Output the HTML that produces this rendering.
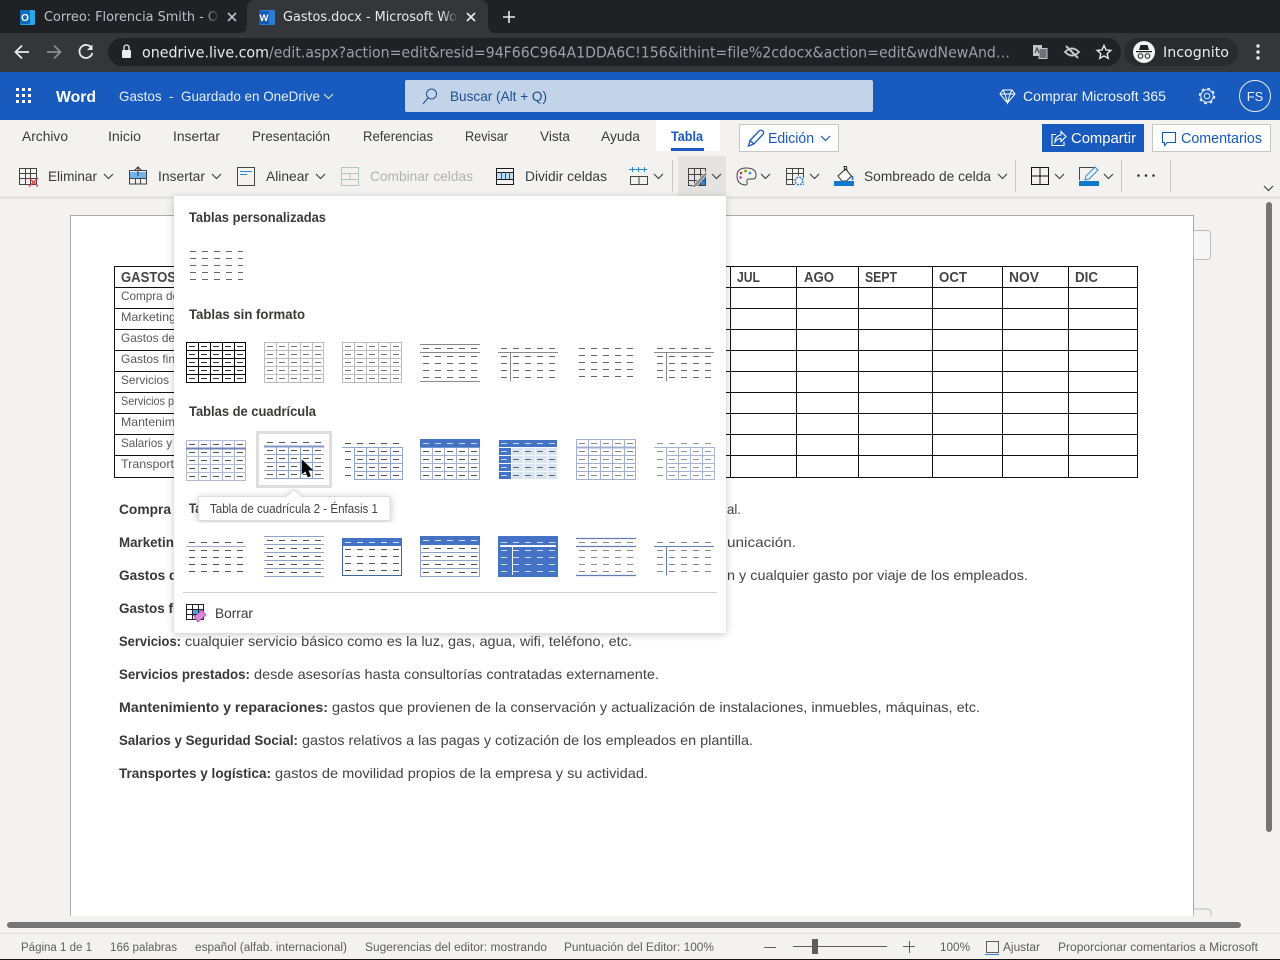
<!DOCTYPE html>
<html lang="es"><head><meta charset="utf-8"><title>Gastos.docx - Microsoft Word</title>
<style>
html,body{margin:0;padding:0;width:1280px;height:960px;overflow:hidden;background:#f3f2f1}
svg{display:block;position:absolute;left:0;top:0}
text{font-family:"Liberation Sans",sans-serif;white-space:pre}
.c{font-family:"DejaVu Sans",sans-serif}
.r{font-size:14px;fill:#3b3a39}
.h{font-size:14px;fill:#3b3a39;font-weight:bold;stroke:none}
.d{font-size:14px;fill:#444}
.b{font-size:14px;fill:#383838;font-weight:bold}
.s{font-size:11.5px;fill:#605e5c}
.t{font-size:12px;fill:#5a5a5a}
.m{font-size:14.5px;fill:#444;font-weight:bold}
.ic{fill:none;stroke:#444;stroke-width:1}
.ch{fill:none;stroke:#444;stroke-width:1.2}
</style></head><body>
<svg width="1280" height="960" viewBox="0 0 1280 960" xmlns="http://www.w3.org/2000/svg">
<defs>
<path id="dd" fill="none" d="M3 4.500h6M15 4.500h6M27 4.500h6M39 4.500h6M51 4.500h6M3 12.500h6M15 12.500h6M27 12.500h6M39 12.500h6M51 12.500h6M3 20.500h6M15 20.500h6M27 20.500h6M39 20.500h6M51 20.500h6M3 28.500h6M15 28.500h6M27 28.500h6M39 28.500h6M51 28.500h6M3 36.500h6M15 36.500h6M27 36.500h6M39 36.500h6M51 36.500h6"/>
<path id="dl" fill="none" d="M3 6.500h6M15 6.500h6M27 6.500h6M39 6.500h6M51 6.500h6M3 13.500h6M15 13.500h6M27 13.500h6M39 13.500h6M51 13.500h6M3 20.500h6M15 20.500h6M27 20.500h6M39 20.500h6M51 20.500h6M3 27.500h6M15 27.500h6M27 27.500h6M39 27.500h6M51 27.500h6M3 34.500h6M15 34.500h6M27 34.500h6M39 34.500h6M51 34.500h6"/>
<path id="dh" fill="none" d="M3 6.500h6M15 6.500h6M27 6.500h6M39 6.500h6M51 6.500h6M3 14.500h6M15 14.500h6M27 14.500h6M39 14.500h6M51 14.500h6M3 21.500h6M15 21.500h6M27 21.500h6M39 21.500h6M51 21.500h6M3 28.500h6M15 28.500h6M27 28.500h6M39 28.500h6M51 28.500h6M3 35.500h6M15 35.500h6M27 35.500h6M39 35.500h6M51 35.500h6"/>
<path id="gr" fill="none" d="M.5 .5h59v40h-59zM.5 8.500h59M.5 16.500h59M.5 24.500h59M.5 32.500h59M12.500 .5v40M24.500 .5v40M36.500 .5v40M48.500 .5v40"/>
<path id="gs" fill="none" d="M12.500 8.500h48v32h-48zM12.500 16.500h48M12.500 24.500h48M12.500 32.500h48M24.500 8.500v32M36.500 8.500v32M48.500 8.500v32M0 8.500h13"/>
<path id="cv" fill="none" d="M0 0l4.500 4.500 4.500-4.500"/>
<linearGradient id="f1"><stop offset="0" stop-color="#202124" stop-opacity="0"/><stop offset="1" stop-color="#202124"/></linearGradient>
<linearGradient id="f2"><stop offset="0" stop-color="#35363a" stop-opacity="0"/><stop offset="1" stop-color="#35363a"/></linearGradient>
<filter id="sh" x="-5%" y="-5%" width="110%" height="110%"><feDropShadow dx="0" dy="1.500" stdDeviation="4" flood-color="#000" flood-opacity=".22"/></filter>
</defs>

<!-- doc area -->
<rect x="0" y="196" width="1280" height="764" fill="#f3f2f1"/>
<rect x="0" y="196" width="1280" height="3" fill="#e4e3e2"/>
<rect x="70.500" y="215.500" width="1123" height="760" fill="#fff" stroke="#ababab"/>
<rect x="0" y="916" width="1280" height="44" fill="#f3f2f1"/>
<path d="M1193.500 230.500h14q3 0 3 3v23q0 3-3 3h-14z" fill="#f6f6f6" stroke="#bcbcbc"/>
<path d="M1193.500 916v-7h14q3.500 0 3.500 3.500v3.500" fill="none" stroke="#bcbcbc"/>

<!-- table -->
<path fill="none" stroke="#111" d="M114.500 266.500h1023v211h-1023zM114 287.500h1024M114 308.500h1024M114 329.500h1024M114 350.500h1024M114 371.500h1024M114 392.500h1024M114 413.500h1024M114 434.500h1024M114 455.500h1024M730.500 266v211M796.500 266v211M858.500 266v211M932.500 266v211M1002.500 266v211M1068.500 266v211"/>
<text x="121" y="282" class="m" textLength="55" lengthAdjust="spacingAndGlyphs">GASTOS</text>
<text x="737" y="282" class="m" textLength="23" lengthAdjust="spacingAndGlyphs">JUL</text>
<text x="804" y="282" class="m" textLength="30" lengthAdjust="spacingAndGlyphs">AGO</text>
<text x="865" y="282" class="m" textLength="32" lengthAdjust="spacingAndGlyphs">SEPT</text>
<text x="939" y="282" class="m" textLength="28" lengthAdjust="spacingAndGlyphs">OCT</text>
<text x="1009" y="282" class="m" textLength="30" lengthAdjust="spacingAndGlyphs">NOV</text>
<text x="1075" y="282" class="m" textLength="23" lengthAdjust="spacingAndGlyphs">DIC</text>
<text x="121" y="300" class="t" textLength="58" lengthAdjust="spacingAndGlyphs">Compra de</text>
<text x="121" y="321" class="t" textLength="55" lengthAdjust="spacingAndGlyphs">Marketing</text>
<text x="121" y="342" class="t" textLength="54" lengthAdjust="spacingAndGlyphs">Gastos de</text>
<text x="121" y="363" class="t" textLength="54" lengthAdjust="spacingAndGlyphs">Gastos fin</text>
<text x="121" y="384" class="t" textLength="48" lengthAdjust="spacingAndGlyphs">Servicios</text>
<text x="121" y="405" class="t" textLength="53" lengthAdjust="spacingAndGlyphs">Servicios p</text>
<text x="121" y="426" class="t" textLength="54" lengthAdjust="spacingAndGlyphs">Mantenim</text>
<text x="121" y="447" class="t" textLength="51" lengthAdjust="spacingAndGlyphs">Salarios y</text>
<text x="121" y="468" class="t" textLength="53" lengthAdjust="spacingAndGlyphs">Transport</text>

<!-- doc paragraphs -->
<text x="119" y="514" class="b" textLength="52" lengthAdjust="spacingAndGlyphs">Compra</text>
<text x="727" y="514" class="d" textLength="14" lengthAdjust="spacingAndGlyphs">al.</text>
<text x="119" y="547" class="b" textLength="63" lengthAdjust="spacingAndGlyphs">Marketing</text>
<text x="727" y="547" class="d" textLength="69" lengthAdjust="spacingAndGlyphs">unicación.</text>
<text x="119" y="580" class="b" textLength="66" lengthAdjust="spacingAndGlyphs">Gastos de</text>
<text x="727" y="580" class="d" textLength="301" lengthAdjust="spacingAndGlyphs">n y cualquier gasto por viaje de los empleados.</text>
<text x="119" y="613" class="b" textLength="66" lengthAdjust="spacingAndGlyphs">Gastos fin</text>
<text x="119" y="646" class="b" textLength="62" lengthAdjust="spacingAndGlyphs">Servicios:</text>
<text x="185" y="646" class="d" textLength="447" lengthAdjust="spacingAndGlyphs">cualquier servicio básico como es la luz, gas, agua, wifi, teléfono, etc.</text>
<text x="119" y="679" class="b" textLength="131" lengthAdjust="spacingAndGlyphs">Servicios prestados:</text>
<text x="254" y="679" class="d" textLength="405" lengthAdjust="spacingAndGlyphs">desde asesorías hasta consultorías contratadas externamente.</text>
<text x="119" y="712" class="b" textLength="209" lengthAdjust="spacingAndGlyphs">Mantenimiento y reparaciones:</text>
<text x="332" y="712" class="d" textLength="648" lengthAdjust="spacingAndGlyphs">gastos que provienen de la conservación y actualización de instalaciones, inmuebles, máquinas, etc.</text>
<text x="119" y="745" class="b" textLength="179" lengthAdjust="spacingAndGlyphs">Salarios y Seguridad Social:</text>
<text x="302" y="745" class="d" textLength="451" lengthAdjust="spacingAndGlyphs">gastos relativos a las pagas y cotización de los empleados en plantilla.</text>
<text x="119" y="778" class="b" textLength="152" lengthAdjust="spacingAndGlyphs">Transportes y logística:</text>
<text x="275" y="778" class="d" textLength="373" lengthAdjust="spacingAndGlyphs">gastos de movilidad propios de la empresa y su actividad.</text>

<!-- scrollbars -->
<rect x="7" y="922" width="1234" height="6" rx="3" fill="#767676"/>
<rect x="1266" y="202" width="6" height="630" rx="3" fill="#767676"/>

<!-- status bar -->
<rect x="0" y="933" width="1280" height="26" fill="#f3f2f1"/>
<path d="M0 933.500h1280" stroke="#e1dfdd"/>
<rect x="0" y="959" width="1280" height="1" fill="#111"/>
<text x="21" y="951" class="s" textLength="71" lengthAdjust="spacingAndGlyphs">Página 1 de 1</text>
<text x="110" y="951" class="s" textLength="67" lengthAdjust="spacingAndGlyphs">166 palabras</text>
<text x="195" y="951" class="s" textLength="152" lengthAdjust="spacingAndGlyphs">español (alfab. internacional)</text>
<text x="365" y="951" class="s" textLength="182" lengthAdjust="spacingAndGlyphs">Sugerencias del editor: mostrando</text>
<text x="564" y="951" class="s" textLength="150" lengthAdjust="spacingAndGlyphs">Puntuación del Editor: 100%</text>
<path d="M764 947.500h12M793 946.500h94M903 946.500h12M909.500 941v12" stroke="#605e5c" fill="none"/>
<rect x="812" y="939" width="6" height="15" fill="#605e5c"/>
<text x="940" y="951" class="s" textLength="30" lengthAdjust="spacingAndGlyphs">100%</text>
<path d="M986.500 941.500h12v11h-12z" fill="none" stroke="#605e5c"/>
<path d="M985 954.500h14" stroke="#2b88d8"/>
<text x="1003" y="951" class="s" textLength="37" lengthAdjust="spacingAndGlyphs">Ajustar</text>
<text x="1058" y="951" class="s" textLength="200" lengthAdjust="spacingAndGlyphs">Proporcionar comentarios a Microsoft</text>

<!-- browser chrome -->
<rect x="0" y="0" width="1280" height="33" fill="#202124"/>
<rect x="0" y="33" width="1280" height="39" fill="#35363a"/>
<path d="M239 33q8 0 8-8V8q0-8 8-8h225q8 0 8 8v17q0 8 8 8z" fill="#35363a"/>
<rect x="20" y="10" width="15" height="15" rx="1.500" fill="#28a8ea"/><rect x="20" y="10" width="10" height="14" fill="#0f6cbd"/>
<text x="25" y="21" font-size="10" font-weight="bold" fill="#fff" text-anchor="middle">O</text>
<rect x="259" y="10" width="16" height="15" rx="1.500" fill="#2b7cd3"/><rect x="259" y="11" width="10" height="13" fill="#185abd"/>
<text x="264" y="21" font-size="9.500" font-weight="bold" fill="#fff" text-anchor="middle">W</text>
<text x="44" y="21" class="c" font-size="13" fill="#bdc1c6" textLength="174" lengthAdjust="spacingAndGlyphs">Correo: Florencia Smith - O</text>
<rect x="204" y="6" width="16" height="22" fill="url(#f1)"/>
<text x="283" y="21" class="c" font-size="13" fill="#e8eaed" textLength="174" lengthAdjust="spacingAndGlyphs">Gastos.docx - Microsoft Wo</text>
<rect x="442" y="6" width="16" height="22" fill="url(#f2)"/>
<path d="M228 13l8 8M236 13l-8 8" stroke="#bdc1c6" stroke-width="1.600"/>
<path d="M467 13l8 8M475 13l-8 8" stroke="#e8eaed" stroke-width="1.600"/>
<path d="M503 17h12M509 11v12" stroke="#e8eaed" stroke-width="1.600"/>

<path d="M29 52H16M22 45.500l-6.500 6.500 6.500 6.500" fill="none" stroke="#e8eaed" stroke-width="1.800"/>
<path d="M47 52h13M54 45.500l6.500 6.500-6.500 6.500" fill="none" stroke="#8a8d91" stroke-width="1.800"/>
<path d="M91.500 48a6.500 6.500 0 1 0 .8 5" fill="none" stroke="#e8eaed" stroke-width="1.800"/><path d="M92.500 44.500v5.500h-5.500z" fill="#e8eaed"/>
<rect x="108" y="38" width="1013" height="28" rx="14" fill="#202124"/>
<rect x="1124" y="38" width="114" height="28" rx="14" fill="#2a2b2e"/>
<rect x="122" y="50" width="9" height="8" rx="1" fill="#e8eaed"/><path d="M124 50v-2.500a2.500 2.500 0 0 1 5 0v2.500" fill="none" stroke="#e8eaed" stroke-width="1.300"/>
<text x="142" y="57.500" class="c" font-size="15" fill="#e8eaed" textLength="127" lengthAdjust="spacingAndGlyphs">onedrive.live.com</text>
<text x="269" y="57.500" class="c" font-size="15" fill="#9aa0a6" textLength="741" lengthAdjust="spacingAndGlyphs">/edit.aspx?action=edit&amp;resid=94F66C964A1DDA6C!156&amp;ithint=file%2cdocx&amp;action=edit&amp;wdNewAnd…</text>
<rect x="1033" y="45" width="9" height="11" fill="#c4c7c9"/><path d="M1039 48.500h8v10h-8z" fill="#6f7276" stroke="#c4c7c9"/><path d="M1035 53l2-5 2 5" fill="none" stroke="#333"/>
<path d="M1065 52q7-7 14 0q-7 7-14 0z" fill="none" stroke="#c4c7c9" stroke-width="1.800"/><path d="M1066 46l12 12" stroke="#c4c7c9" stroke-width="2"/>
<path d="M1104 45.500l2 4.400 4.800.5-3.600 3.200 1 4.700-4.200-2.400-4.200 2.400 1-4.700-3.600-3.200 4.800-.5z" fill="none" stroke="#e8eaed" stroke-width="1.400"/>
<circle cx="1144" cy="52" r="11" fill="#f1f3f4"/>
<path d="M1136 51h16v1.200h-16zM1139 50l1.500-5h7l1.500 5z" fill="#202124"/>
<circle cx="1140.500" cy="56" r="2.300" fill="none" stroke="#202124"/><circle cx="1147.500" cy="56" r="2.300" fill="none" stroke="#202124"/>
<text x="1163" y="57" class="c" font-size="14.500" fill="#e8eaed" textLength="66" lengthAdjust="spacingAndGlyphs">Incognito</text>
<circle cx="1258" cy="46" r="1.700" fill="#e8eaed"/><circle cx="1258" cy="52" r="1.700" fill="#e8eaed"/><circle cx="1258" cy="58" r="1.700" fill="#e8eaed"/>

<!-- word header -->
<rect x="0" y="72" width="1280" height="48" fill="#185abd"/>
<g fill="#fff"><rect x="16" y="88" width="3" height="3"/><rect x="22" y="88" width="3" height="3"/><rect x="28" y="88" width="3" height="3"/><rect x="16" y="94" width="3" height="3"/><rect x="22" y="94" width="3" height="3"/><rect x="28" y="94" width="3" height="3"/><rect x="16" y="100" width="3" height="3"/><rect x="22" y="100" width="3" height="3"/><rect x="28" y="100" width="3" height="3"/></g>
<text x="56" y="102" font-size="16" font-weight="bold" fill="#fff" textLength="40" lengthAdjust="spacingAndGlyphs">Word</text>
<text x="119" y="101" font-size="14" fill="#e3ecf7" textLength="201" lengthAdjust="spacingAndGlyphs">Gastos  -  Guardado en OneDrive</text>
<use href="#cv" x="324" y="94" stroke="#e3ecf7"/>
<rect x="405" y="80" width="468" height="32" rx="2" fill="#c3d4e9"/>
<circle cx="431.500" cy="94" r="5" fill="none" stroke="#1f4f90"/><path d="M428 98l-5 6" stroke="#1f4f90"/>
<text x="450" y="101" font-size="14" fill="#1d4d8f" textLength="97" lengthAdjust="spacingAndGlyphs">Buscar (Alt + Q)</text>
<path d="M1003 90h9l3 4-7.500 9-7.500-9zM1000 94h15M1005 94l2.500 9 2.500-9M1003 90l2 4M1012 90l-2 4" fill="none" stroke="#fff"/>
<text x="1023" y="101" font-size="14" fill="#eef3fa" textLength="143" lengthAdjust="spacingAndGlyphs">Comprar Microsoft 365</text>
<circle cx="1207" cy="96" r="2.800" fill="none" stroke="#e3ecf7"/><circle cx="1207" cy="96" r="6.200" fill="none" stroke="#e3ecf7"/><circle cx="1207" cy="96" r="7.500" fill="none" stroke="#e3ecf7" stroke-width="1.500" stroke-dasharray="2.900 3"/>
<circle cx="1255" cy="96" r="15.500" fill="none" stroke="#e3ecf7"/>
<text x="1255" y="101" font-size="13" fill="#e8eff8" text-anchor="middle">FS</text>

<!-- ribbon -->
<rect x="0" y="120" width="1280" height="76" fill="#f3f2f1"/>
<rect x="656" y="120" width="64" height="31" fill="#fff"/>
<rect x="671" y="148" width="33" height="3" fill="#185abd"/>
<text x="22" y="141" class="r" textLength="46" lengthAdjust="spacingAndGlyphs">Archivo</text>
<text x="108" y="141" class="r" textLength="33" lengthAdjust="spacingAndGlyphs">Inicio</text>
<text x="173" y="141" class="r" textLength="47" lengthAdjust="spacingAndGlyphs">Insertar</text>
<text x="252" y="141" class="r" textLength="78" lengthAdjust="spacingAndGlyphs">Presentación</text>
<text x="363" y="141" class="r" textLength="70" lengthAdjust="spacingAndGlyphs">Referencias</text>
<text x="465" y="141" class="r" textLength="43" lengthAdjust="spacingAndGlyphs">Revisar</text>
<text x="540" y="141" class="r" textLength="30" lengthAdjust="spacingAndGlyphs">Vista</text>
<text x="601" y="141" class="r" textLength="39" lengthAdjust="spacingAndGlyphs">Ayuda</text>
<text x="671" y="141" font-size="14" font-weight="bold" fill="#185abd" textLength="32" lengthAdjust="spacingAndGlyphs">Tabla</text>

<rect x="739.500" y="124.500" width="99" height="27" fill="#fff" stroke="#c8c6c4"/>
<path d="M748.500 146l1.500-5.500 9-9.500q2-1.500 3.800 0t0 3.500l-9 9.500zM750 140.500l4 3.500" fill="none" stroke="#185abd" stroke-width="1.300"/>
<text x="768" y="143" font-size="14.500" fill="#185abd" textLength="46" lengthAdjust="spacingAndGlyphs">Edición</text>
<use href="#cv" x="821" y="136" stroke="#185abd" stroke-width="1.200"/>
<rect x="1042" y="124" width="102" height="28" fill="#185abd"/>
<path d="M1056 134.500h-4v11h12v-4M1055 142q0-6 6-7v-3.500l5 5-5 5v-3q-4 0-6 3.500z" fill="none" stroke="#fff" stroke-width="1.100"/>
<text x="1071" y="143" font-size="14.500" fill="#fff" textLength="65" lengthAdjust="spacingAndGlyphs">Compartir</text>
<rect x="1152.500" y="124.500" width="118" height="27" fill="#fff" stroke="#c8c6c4"/>
<path d="M1162.500 132.500h13v10h-8l-3 3v-3h-2z" fill="none" stroke="#185abd" stroke-width="1.100"/>
<text x="1181" y="143" font-size="14.500" fill="#185abd" textLength="81" lengthAdjust="spacingAndGlyphs">Comentarios</text>

<!-- toolbar -->
<rect x="678" y="156" width="48" height="40" fill="#e5e3e1"/>
<path d="M672.500 160v32M1015.500 160v32M1121.500 160v32M1170.500 160v32" stroke="#c8c6c4"/>
<path class="ic" d="M19.500 168.500h17v16h-17zM19.500 173.500h17M19.500 178.500h17M25.500 168.500v16M30.500 168.500v16"/>
<path d="M29 178l9 8.500M38 178l-9 8.500" stroke="#e8403d" stroke-width="1.400"/>
<text x="48" y="181" class="r" textLength="49" lengthAdjust="spacingAndGlyphs">Eliminar</text><use href="#cv" x="104" y="174" class="ch"/>
<rect x="129.500" y="172" width="17" height="6" fill="#6fb3e8"/>
<path class="ic" d="M129.500 170.500h17v13.500h-17zM129.500 178.500h17M135.500 178v6M140.500 178v6"/>
<path d="M138 176v-9M134.500 170.500l3.500-3.500 3.500 3.500" fill="none" stroke="#333"/>
<text x="158" y="181" class="r" textLength="47" lengthAdjust="spacingAndGlyphs">Insertar</text><use href="#cv" x="212" y="174" class="ch"/>
<rect class="ic" x="237.500" y="167.500" width="17" height="18" fill="#fff"/><path d="M240 171.500h12M240 174.500h7" stroke="#2b88d8"/>
<text x="266" y="181" class="r" textLength="43" lengthAdjust="spacingAndGlyphs">Alinear</text><use href="#cv" x="316" y="174" class="ch"/>
<path d="M341.500 167.500h17v18h-17zM341.500 173.500h17M341.500 179.500h17M350 173.500v6" fill="none" stroke="#b5c4bd"/>
<text x="370" y="181" font-size="14" fill="#b3b0ad" textLength="103" lengthAdjust="spacingAndGlyphs">Combinar celdas</text>
<rect x="497" y="172" width="16" height="7" fill="#bcdcf5"/>
<path d="M496.500 168.500h17v16h-17zM496.500 172.500h17M496.500 179.500h17" fill="none" stroke="#1a1a1a"/><path d="M501.500 172v7M505.500 172v7M509.500 172v7" stroke="#185abd"/>
<text x="525" y="181" class="r" textLength="82" lengthAdjust="spacingAndGlyphs">Dividir celdas</text>
<path d="M629 169.500h18M632.500 167v5M638.500 167v5M644.500 167v5" stroke="#2b88d8" fill="none"/><path class="ic" d="M630.500 176.500h17v8h-17zM639 176.500v8"/>
<use href="#cv" x="654" y="174" class="ch"/>
<path d="M696 186l10-11v11z" fill="#2b88d8"/>
<path class="ic" d="M688.500 168.500h17v17h-17zM688.500 174.500h17M688.500 180.500h17M694.500 168.500v17M700.500 168.500v17"/>
<path d="M690 187q3-.5 4.500-3.500l11-11.500 2 2-10.500 12q-3 2-7 1z" fill="#8a8a8a" stroke="#eee" stroke-width=".6"/>
<use href="#cv" x="712" y="174" class="ch"/>
<path d="M746 168q-9 0-9 8t8 9q3 0 2-3t2-3h4q3 0 3-4 0-7-10-7z" fill="none" stroke="#444"/>
<circle cx="741" cy="173" r="1.300" fill="#d13438"/><circle cx="745.500" cy="171" r="1.300" fill="#57a300"/><circle cx="750" cy="173" r="1.300" fill="#2b88d8"/><circle cx="740.500" cy="177.500" r="1.300" fill="#c239b3"/>
<use href="#cv" x="761" y="174" class="ch"/>
<path class="ic" d="M786.500 168.500h17v16h-17zM786.500 173.500h17M786.500 179.500h17M792.500 168.500v16M798.500 168.500v16"/>
<circle cx="799" cy="181" r="5.500" fill="#f3f2f1"/><circle cx="799" cy="181" r="3.800" fill="#f3f2f1" stroke="#2b88d8" stroke-width="1.600" stroke-dasharray="2 1"/>
<use href="#cv" x="810" y="174" class="ch"/>
<path d="M838 176l7.500-7 6 7-5 5h-4.500z" fill="#fff" stroke="#323130"/><path d="M845 171l-1-4.500 2.500 0 .5 4" fill="none" stroke="#323130"/><path d="M852.500 176v4" stroke="#0f78c8" stroke-width="1.600"/>
<rect x="834" y="181" width="20" height="5" fill="#0f78c8"/>
<text x="864" y="181" class="r" textLength="127" lengthAdjust="spacingAndGlyphs">Sombreado de celda</text><use href="#cv" x="998" y="174" class="ch"/>
<path d="M1031.500 167.500h17v17h-17zM1040 167.500v17M1031.500 176h17" fill="none" stroke="#111"/>
<use href="#cv" x="1055" y="174" class="ch"/>
<path d="M1079.500 180v-12.500h15" fill="none" stroke="#444"/>
<path d="M1085 180l1-4 9-9 3 3-9 9z" fill="none" stroke="#2b88d8"/>
<rect x="1079" y="181" width="20" height="5" fill="#0f78c8"/>
<use href="#cv" x="1104" y="174" class="ch"/>
<circle cx="1138.500" cy="175.500" r="1.300" fill="#323130"/><circle cx="1146" cy="175.500" r="1.300" fill="#323130"/><circle cx="1153.500" cy="175.500" r="1.300" fill="#323130"/>
<use href="#cv" x="1264" y="186" class="ch"/>

<!-- style popup -->
<rect x="174" y="196" width="552" height="437" fill="#fff" filter="url(#sh)"/>
<text x="189" y="222" class="h" textLength="137" lengthAdjust="spacingAndGlyphs">Tablas personalizadas</text>
<path stroke="#666" fill="none" d="M190 251.500h6M202 251.500h6M214 251.500h6M226 251.500h6M238 251.500h5M190 258.500h6M202 258.500h6M214 258.500h6M226 258.500h6M238 258.500h5M190 265.500h6M202 265.500h6M214 265.500h6M226 265.500h6M238 265.500h5M190 272.500h6M202 272.500h6M214 272.500h6M226 272.500h6M238 272.500h5M190 279.500h6M202 279.500h6M214 279.500h6M226 279.500h6M238 279.500h5"/>
<text x="189" y="319" class="h" textLength="116" lengthAdjust="spacingAndGlyphs">Tablas sin formato</text>
<text x="189" y="416" class="h" textLength="127" lengthAdjust="spacingAndGlyphs">Tablas de cuadrícula</text>
<text x="189" y="513" class="h" textLength="80" lengthAdjust="spacingAndGlyphs">Tablas de lista</text>

<!-- row: sin formato -->
<g transform="translate(186,342)"><use href="#gr" stroke="#000"/><use href="#dd" stroke="#333"/></g>
<g transform="translate(264,342)"><use href="#gr" stroke="#bdbdbd"/><use href="#dd" stroke="#777"/></g>
<g transform="translate(342,342)"><use href="#gr" stroke="#bdbdbd"/><use href="#dd" stroke="#777"/></g>
<g transform="translate(420,342)"><path d="M0 2.500h60M0 10.500h60M0 39.500h60" stroke="#888" fill="none"/><use href="#dh" stroke="#666"/></g>
<g transform="translate(498,342)"><path d="M0 10.500h60M12.500 10.500v29" stroke="#888" fill="none"/><use href="#dh" stroke="#666"/></g>
<g transform="translate(576,342)"><use href="#dl" stroke="#666"/></g>
<g transform="translate(654,342)"><path d="M0 10.500h60M12.500 10.500v29" stroke="#888" fill="none"/><use href="#dh" stroke="#666"/></g>

<!-- row: cuadricula -->
<g transform="translate(186,440)"><use href="#gr" stroke="#aeb9d8"/><path d="M0 8.500h60" stroke="#7083b8" stroke-width="2"/><use href="#dd" stroke="#555"/></g>
<rect x="257.500" y="432.500" width="73" height="54" fill="#fff" stroke="#dedede" stroke-width="3"/>
<g transform="translate(264,438)"><path fill="none" stroke="#8fa4cf" d="M0 16.500h60M0 24.500h60M0 32.500h60M0 40.500h60M12.500 8.500v32M24.500 8.500v32M36.500 8.500v32M48.500 8.500v32"/><path d="M0 8.500h60" stroke="#7f97c9" stroke-width="2"/><use href="#dd" stroke="#555"/></g>
<g transform="translate(342,439)"><use href="#gs" stroke="#8fa4cf"/><use href="#dd" stroke="#555"/></g>
<g transform="translate(420,439)"><use href="#gr" stroke="#a3b2d3"/><rect x="0" y="0" width="60" height="8.500" fill="#4472c4"/><use href="#dd" stroke="#555"/><path d="M3 4.500h6M15 4.500h6M27 4.500h6M39 4.500h6M51 4.500h6" stroke="#c9d7f0"/></g>
<g transform="translate(498,439)"><rect x="1" y="1" width="58" height="39" fill="#dbe4f1"/><rect x="1" y="1" width="58" height="7" fill="#4472c4"/><rect x="1" y="1" width="12" height="39" fill="#4472c4"/><path d="M1 8.500h58M1 16.500h58M1 24.500h58M1 32.500h58M13.500 8v32M25.500 8v32M37.500 8v32M49.500 8v32" stroke="#f4f7fb" fill="none"/><use href="#dd" stroke="#667"/><path d="M3 4.500h6M15 4.500h6M27 4.500h6M39 4.500h6M51 4.500h6M3 12.500h6M3 20.500h6M3 28.500h6M3 36.500h6" stroke="#c9d7f0"/></g>
<g transform="translate(576,439)"><use href="#gr" stroke="#a0afd0"/><path d="M0 8.500h60" stroke="#a0afd0" stroke-width="2"/><use href="#dd" stroke="#888"/></g>
<g transform="translate(654,439)"><use href="#gs" stroke="#a6b4d4"/><use href="#dd" stroke="#999"/></g>

<!-- row: lista -->
<g transform="translate(186,536)"><path d="M0 10.500h60" stroke="#9fabd0" fill="none"/><use href="#dh" stroke="#555"/></g>
<g transform="translate(264,536)"><path d="M0 .5h60M0 8.500h60M0 16.500h60M0 24.500h60M0 32.500h60M0 40.500h60" stroke="#8fa4cf" fill="none"/><use href="#dd" stroke="#555"/></g>
<g transform="translate(342,538)"><rect x=".5" y=".5" width="59" height="37" fill="#fff" stroke="#3c64a8"/><rect width="60" height="8" fill="#4472c4"/><path d="M3 4.500h6M15 4.500h6M27 4.500h6M39 4.500h6M51 4.500h6" stroke="#d6e1f5"/><path d="M3 11.500h6M15 11.500h6M27 11.500h6M39 11.500h6M51 11.500h6M3 18.500h6M15 18.500h6M27 18.500h6M39 18.500h6M51 18.500h6M3 25.500h6M15 25.500h6M27 25.500h6M39 25.500h6M51 25.500h6M3 32.500h6M15 32.500h6M27 32.500h6M39 32.500h6M51 32.500h6" stroke="#555" fill="none"/></g>
<g transform="translate(420,536)"><rect x=".5" y=".5" width="59" height="40" fill="#fff" stroke="#8fa4cf"/><rect width="60" height="9" fill="#4472c4"/><path d="M0 16.500h60M0 24.500h60M0 32.500h60" stroke="#8fa4cf" fill="none"/><use href="#dd" stroke="#555"/><path d="M3 4.500h6M15 4.500h6M27 4.500h6M39 4.500h6M51 4.500h6" stroke="#d6e1f5"/></g>
<g transform="translate(498,536)"><rect width="60" height="41" fill="#4472c4"/><use href="#dh" stroke="#cfdcf3"/><path d="M2 10h56" stroke="#fff" stroke-width="2"/><path d="M14.500 11v28" stroke="#fff"/></g>
<g transform="translate(576,536)"><path d="M0 2.500h60M0 10.500h60M0 39.500h60" stroke="#5f80b0" fill="none" stroke-width="1.200"/><use href="#dh" stroke="#888"/></g>
<g transform="translate(654,536)"><path d="M0 10.500h60M12.500 10.500v29" stroke="#5f80b0" fill="none"/><use href="#dh" stroke="#888"/></g>

<path d="M183 592.500h534" stroke="#cfcfcf"/>
<rect x="193" y="609" width="8" height="7" fill="#4aa3e8"/>
<path d="M186.500 604.500h17v15h-17zM186.500 609.500h17M186.500 614.500h17M192.500 604.500v15M198.500 604.500v15" fill="none" stroke="#222"/>
<path d="M194 617l8-7 4 5-8 7z" fill="#d88ad8" stroke="#a543a5" stroke-width=".7"/>
<text x="215" y="618" font-size="14" fill="#3b3a39" textLength="38" lengthAdjust="spacingAndGlyphs">Borrar</text>

<!-- tooltip -->
<path d="M198.500 496.500h88l7.500-7 7.500 7h88.500v24h-191.500z" fill="#fff" stroke="#dcdcdc" filter="url(#sh)"/>
<text x="210" y="513" font-size="12.500" fill="#444" textLength="168" lengthAdjust="spacingAndGlyphs">Tabla de cuadrícula 2 - Énfasis 1</text>
<!-- cursor -->
<path d="M302 460v14l3.500-3 2.500 6 2.500-1-2.500-6h4.500z" fill="#000" stroke="#111" stroke-width=".6"/>
</svg>
</body></html>
